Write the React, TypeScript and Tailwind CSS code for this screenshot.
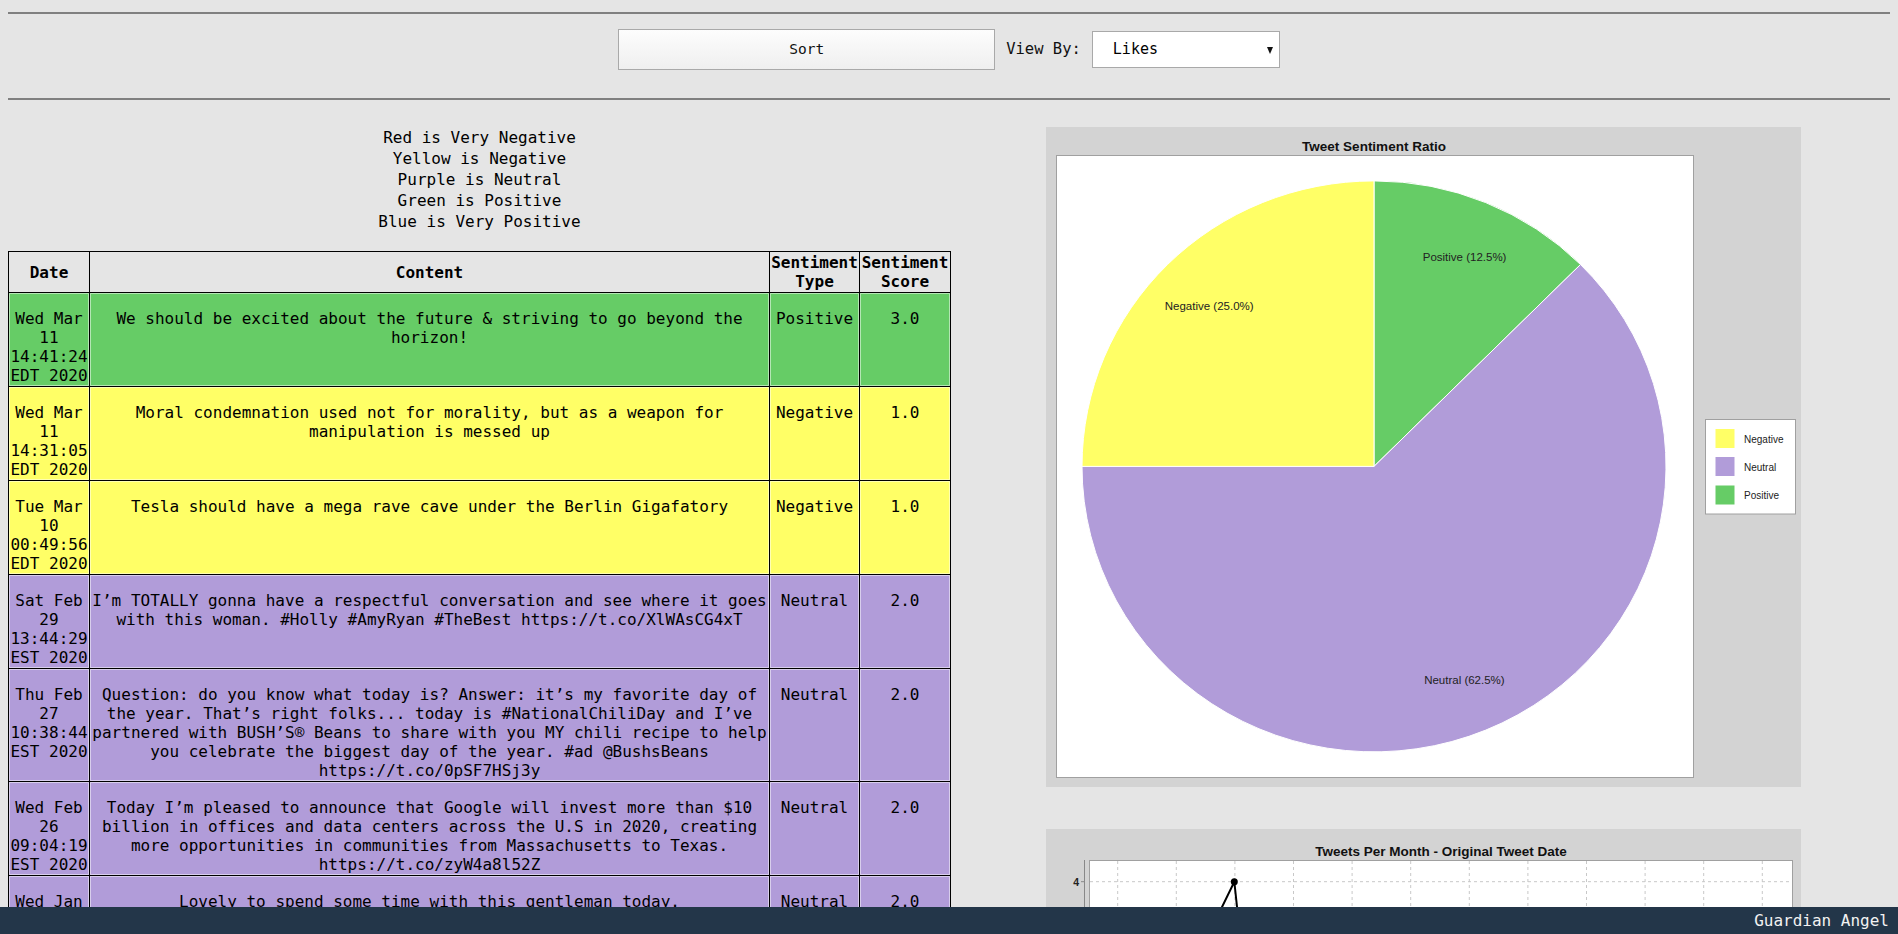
import React from 'react';

type Tweet = {
  date: string;
  content: string;
  type: 'Positive' | 'Negative' | 'Neutral';
  score: string;
};

const TWEETS: Tweet[] = [
  { date: 'Wed Mar 11 14:41:24 EDT 2020', content: 'We should be excited about the future & striving to go beyond the horizon!', type: 'Positive', score: '3.0' },
  { date: 'Wed Mar 11 14:31:05 EDT 2020', content: 'Moral condemnation used not for morality, but as a weapon for manipulation is messed up', type: 'Negative', score: '1.0' },
  { date: 'Tue Mar 10 00:49:56 EDT 2020', content: 'Tesla should have a mega rave cave under the Berlin Gigafatory', type: 'Negative', score: '1.0' },
  { date: 'Sat Feb 29 13:44:29 EST 2020', content: 'I’m TOTALLY gonna have a respectful conversation and see where it goes with this woman. #Holly #AmyRyan #TheBest https://t.co/XlWAsCG4xT', type: 'Neutral', score: '2.0' },
  { date: 'Thu Feb 27 10:38:44 EST 2020', content: 'Question: do you know what today is? Answer: it’s my favorite day of the year. That’s right folks... today is #NationalChiliDay and I’ve partnered with BUSH’S® Beans to share with you MY chili recipe to help you celebrate the biggest day of the year. #ad @BushsBeans https://t.co/0pSF7HSj3y', type: 'Neutral', score: '2.0' },
  { date: 'Wed Feb 26 09:04:19 EST 2020', content: 'Today I’m pleased to announce that Google will invest more than $10 billion in offices and data centers across the U.S in 2020, creating more opportunities in communities from Massachusetts to Texas. https://t.co/zyW4a8l52Z', type: 'Neutral', score: '2.0' },
  { date: 'Wed Jan 22 16:12:40 EST 2020', content: 'Lovely to spend some time with this gentleman today. https://t.co/Rq2bLm8XcV', type: 'Neutral', score: '2.0' },
];

const ROW_BG: Record<Tweet['type'], string> = {
  Positive: 'bg-[#66cc66]',
  Negative: 'bg-[#ffff66]',
  Neutral: 'bg-[#b19cd9]',
};

const GRID_X = Array.from({ length: 12 }, (_, i) => 71.7 + i * 58.6);

const SentimentPie: React.FC = () => (
  <svg width="755" height="660" viewBox="0 0 755 660" className="block" style={{ fontFamily: '"Liberation Sans", Arial, sans-serif' }}>
    <rect x="0" y="0" width="755" height="660" fill="#d3d3d3" />
    <text x="328" y="24" textAnchor="middle" fontSize="13.5" fontWeight="bold" fill="#111">Tweet Sentiment Ratio</text>
    <rect x="10.5" y="28.5" width="637" height="622" fill="#ffffff" stroke="#a0a0a0" />

    {/* slices, clockwise from 12 o'clock */}
    <path d="M328,339.4 L328,53.9 A292,285.5 0 0 1 534.5,137.5 Z" fill="#66cc66" stroke="#ffffff" strokeWidth="1" />
    <path d="M328,339.4 L534.5,137.5 A292,285.5 0 1 1 36,339.4 Z" fill="#b19cd9" stroke="#ffffff" strokeWidth="1" />
    <path d="M328,339.4 L36,339.4 A292,285.5 0 0 1 328,53.9 Z" fill="#ffff66" stroke="#ffffff" strokeWidth="1" />

    <text x="418.6" y="133.5" textAnchor="middle" fontSize="11.5" fill="#222">Positive (12.5%)</text>
    <text x="163.2" y="183" textAnchor="middle" fontSize="11.5" fill="#222">Negative (25.0%)</text>
    <text x="418.4" y="557" textAnchor="middle" fontSize="11.5" fill="#222">Neutral (62.5%)</text>

    {/* legend */}
    <rect x="659.5" y="292.5" width="90" height="94.5" fill="#ffffff" stroke="#a0a0a0" />
    <rect x="669.5" y="302" width="19" height="19" fill="#ffff66" />
    <rect x="669.5" y="330" width="19" height="19" fill="#b19cd9" />
    <rect x="669.5" y="358.5" width="19" height="19" fill="#66cc66" />
    <text x="698" y="315.5" fontSize="10" fill="#222">Negative</text>
    <text x="698" y="343.5" fontSize="10" fill="#222">Neutral</text>
    <text x="698" y="372" fontSize="10" fill="#222">Positive</text>
  </svg>
);

const TweetsPerMonth: React.FC = () => (
  <svg width="755" height="660" viewBox="0 0 755 660" className="block" style={{ fontFamily: '"Liberation Sans", Arial, sans-serif' }}>
    <rect x="0" y="0" width="755" height="660" fill="#d3d3d3" />
    <text x="395" y="27" textAnchor="middle" fontSize="13.5" fontWeight="bold" fill="#111">Tweets Per Month - Original Tweet Date</text>
    <rect x="43.5" y="31.5" width="703" height="560" fill="#ffffff" stroke="#a0a0a0" />

    {/* grid */}
    {GRID_X.map((x) => (
      <line key={x} x1={x} y1="32" x2={x} y2="591" stroke="#c8c8c8" strokeDasharray="3 3" />
    ))}
    <line x1="44" y1="52.7" x2="746" y2="52.7" stroke="#c8c8c8" strokeDasharray="3 3" />
    <line x1="44" y1="330" x2="746" y2="330" stroke="#c8c8c8" strokeDasharray="3 3" />

    {/* y axis */}
    <line x1="38.5" y1="31" x2="38.5" y2="591" stroke="#888" />
    <line x1="35" y1="52.7" x2="38.5" y2="52.7" stroke="#888" />
    <text x="33" y="56.5" textAnchor="end" fontSize="10.5" fontWeight="bold" fill="#222">4</text>

    {/* series */}
    <polyline points="129.7,173 188.3,52.7 247.5,600 306.1,330" fill="none" stroke="#000" strokeWidth="2" />
    {[[129.7, 173], [188.3, 52.7], [247.5, 600], [306.1, 330]].map(([x, y]) => (
      <circle key={x} cx={x} cy={y} r="3.5" fill="#000" />
    ))}
  </svg>
);

const App: React.FC = () => {
  return (
    <div className="min-h-screen bg-[#e5e5e5] text-black px-2 pt-3 pb-16 font-['DejaVu_Sans_Mono',monospace]">
      {/* ================= TOOLBAR ================= */}
      <hr className="border-t-2 border-[#808080]" />
      <div className="flex items-center justify-center gap-[11px] pt-[15px] pb-[28px]">
        <button className="w-[377px] h-[41px] border border-[#a9a9a9] bg-gradient-to-b from-[#fdfdfd] to-[#efefef] text-[14.5px] text-[#111]">
          Sort
        </button>
        <span className="text-[15.5px] text-[#111]">View By:</span>
        <div className="relative">
          <select
            defaultValue="Likes"
            className="appearance-none w-[188px] h-[37px] border border-[#a9a9a9] bg-white pl-[20px] text-[15px] text-black outline-none"
          >
            <option>Likes</option>
            <option>Retweets</option>
            <option>Date</option>
          </select>
          <svg className="absolute right-[7px] top-[16px] pointer-events-none" width="6" height="7" viewBox="0 0 6 7">
            <path d="M0,0 L6,0 L3,7 Z" fill="#111" />
          </svg>
        </div>
      </div>
      <hr className="border-t-2 border-[#808080]" />

      {/* ================= MAIN ================= */}
      <div className="flex items-start">
        {/* --- left: colour key + tweet table --- */}
        <div className="w-[943px] shrink-0">
          <div className="mt-[27px] mb-[19px] text-center text-[16px] leading-[21px]">
            <div>Red is Very Negative</div>
            <div>Yellow is Negative</div>
            <div>Purple is Neutral</div>
            <div>Green is Positive</div>
            <div>Blue is Very Positive</div>
          </div>

          <table className="w-[943px] table-fixed border-separate border-spacing-[1px] bg-black text-[16px] leading-[19px] text-center">
            <thead>
              <tr>
                <th className="w-[80px] h-[40px] p-0 align-middle font-bold bg-[#e5e5e5] border border-transparent">Date</th>
                <th className="h-[40px] p-0 align-middle font-bold bg-[#e5e5e5] border border-transparent">Content</th>
                <th className="w-[89px] h-[40px] p-0 align-middle font-bold bg-[#e5e5e5] border border-transparent">Sentiment Type</th>
                <th className="w-[90px] h-[40px] p-0 align-middle font-bold bg-[#e5e5e5] border border-transparent">Sentiment Score</th>
              </tr>
            </thead>
            <tbody>
              {TWEETS.map((t) => (
                <tr key={t.date} className={ROW_BG[t.type]}>
                  <td className="px-0 pt-[15px] pb-0 align-top border border-white/50">{t.date}</td>
                  <td className="px-0 pt-[15px] pb-0 align-top border border-white/50">{t.content}</td>
                  <td className="px-0 pt-[15px] pb-0 align-top border border-white/50">{t.type}</td>
                  <td className="px-0 pt-[15px] pb-0 align-top border border-white/50">{t.score}</td>
                </tr>
              ))}
            </tbody>
          </table>
        </div>

        {/* --- right: charts --- */}
        <div className="ml-[95px] mt-[27px] flex flex-col gap-[42px]">
          <SentimentPie />
          <TweetsPerMonth />
        </div>
      </div>

      {/* ================= FOOTER ================= */}
      <footer className="fixed bottom-0 left-0 right-0 h-[27px] bg-[#233649] pr-[9px] text-right text-[16px] leading-[27px] text-[#f2f2f2]">
        Guardian Angel
      </footer>
    </div>
  );
};

export default App;
